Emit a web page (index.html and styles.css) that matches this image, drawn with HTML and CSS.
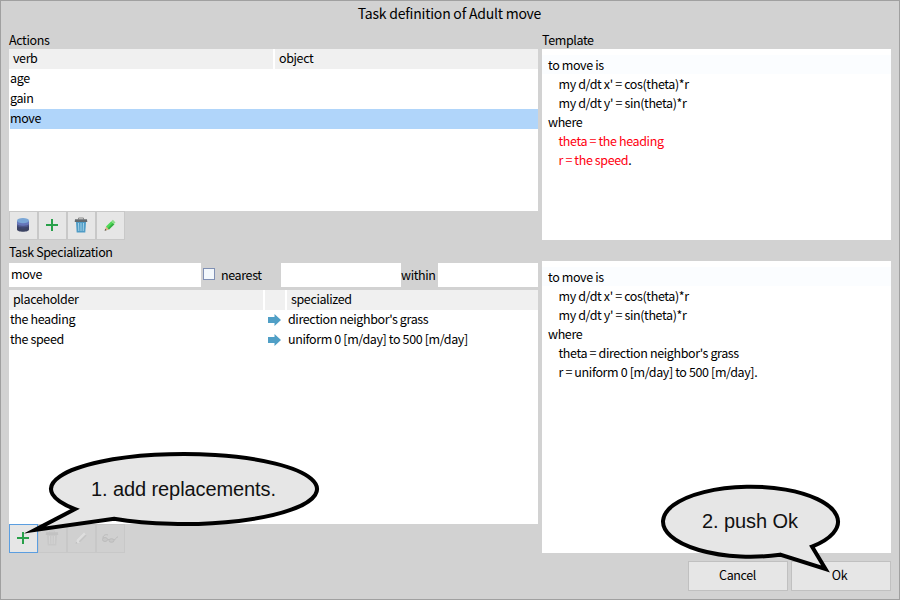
FILE: index.html
```html
<!DOCTYPE html>
<html lang="en">
<head>
<meta charset="utf-8">
<title>Task definition of Adult move</title>
<link rel="stylesheet" href="styles.css">
</head>
<body>
<div class="window">
  <div class="title"><span>Task definition of Adult move</span></div>
  <div class="columns">
    <div class="left">
      <div class="label actions-label">Actions</div>
      <div class="table actions">
        <div class="head"><span>verb</span><span>object</span></div>
        <div class="row">age</div>
        <div class="row">gain</div>
        <div class="row selected">move</div>
      </div>
      <div class="toolbar">
        <div class="tool"><svg width="16" height="16" viewBox="0 0 16 16"><path d="M2 4v8.5c0 3 12 3 12 0V4z" fill="#3d4464"/><path d="M2 4v5.5c0 2.6 12 2.6 12 0V4z" fill="#4d5688"/><path d="M2 4v2.8c0 2.6 12 2.6 12 0V4z" fill="#6676ba"/><ellipse cx="8" cy="3.7" rx="6" ry="2.6" fill="#7aa6d6"/><path d="M2 9.3c1 2.2 11 2.2 12 0" fill="none" stroke="#30385a" stroke-width=".7"/></svg></div>
        <div class="tool"><svg width="16" height="16" viewBox="0 0 16 16"><path d="M8 2v12M2 8h12" stroke="#28a04a" stroke-width="2"/></svg></div>
        <div class="tool"><svg width="16" height="16" viewBox="0 0 16 16"><path d="M5.5 2.5V1h5v1.5" fill="none" stroke="#8a8a8a"/><path d="M2 2.3h12l.3 2.7H1.7z" fill="#646a6e"/><path d="M3 5h10l-.7 10.5H3.7z" fill="#4f9cc6"/><path d="M5.5 6l.3 8M8 6v8M10.5 6l-.3 8" stroke="#a4d2e8"/></svg></div>
        <div class="tool"><svg width="16" height="16" viewBox="0 0 16 16"><path d="M3 13.5l1-4 3 3z" fill="#dfb083"/><path d="M2.6 13.8l.6-2 1.4 1.4z" fill="#554"/><path d="M4 9.5l5.3-5.2 3 3L7 12.5z" fill="#4fd956"/><path d="M5.8 11.3l5.2-5.2 1.3 1.2L7 12.5z" fill="#35ad43"/><path d="M9.3 4.3l1.6-1.5 2.6 2.6-1.6 1.5z" fill="#8bdc88"/></svg></div>
      </div>
      <div class="label spec-label">Task Specialization</div>
      <div class="form">
        <div class="field name">move</div>
        <div class="check"></div>
        <span class="nearest">nearest</span>
        <div class="field middle"></div>
        <span class="within">within</span>
        <div class="field last"></div>
      </div>
      <div class="table places">
        <div class="head"><span>placeholder</span><span></span><span>specialized</span></div>
        <div class="row"><span>the heading</span><svg width="13" height="12" viewBox="0 0 13 12"><path d="M0 3h6.5V0L13 6l-6.5 6V9H0z" fill="#509fc6"/></svg><span>direction neighbor's grass</span></div>
        <div class="row"><span>the speed</span><svg width="13" height="12" viewBox="0 0 13 12"><path d="M0 3h6.5V0L13 6l-6.5 6V9H0z" fill="#509fc6"/></svg><span>uniform 0 [m/day] to 500 [m/day]</span></div>
      </div>
      <div class="toolbar">
        <div class="tool focus"><svg width="16" height="16" viewBox="0 0 16 16"><path d="M8 2v12M2 8h12" stroke="#28a04a" stroke-width="2"/></svg></div>
        <div class="tool off"><svg width="16" height="16" viewBox="0 0 16 16"><path d="M5.5 2.5V1h5v1.5" fill="none" stroke="#c8c8c8"/><path d="M2 2.3h12l.3 2.7H1.7z" fill="#c2c2c2"/><path d="M3 5h10l-.7 10.5H3.7z" fill="#c8c8c8"/><path d="M5.5 6l.3 8M8 6v8M10.5 6l-.3 8" stroke="#d4d4d4"/></svg></div>
        <div class="tool off"><svg width="16" height="16" viewBox="0 0 16 16"><path d="M3 13.5l1-4 7-7 3 3-7 7z" fill="#dedede"/><path d="M5.8 11.3l6.7-6.7 1.5 1L7 12.5z" fill="#c5c5c5"/><path d="M2.6 13.8l.6-2 1.4 1.4z" fill="#bbb"/></svg></div>
        <div class="tool off"><svg width="18" height="16" viewBox="0 0 18 16"><g fill="#c8c8c8" stroke="#bcbcbc"><ellipse cx="4" cy="9.5" rx="2.5" ry="2"/><ellipse cx="10.5" cy="10.5" rx="2.5" ry="1.8"/><path d="M2 8c0-3 3-4 5-3M6.500 9.500h1.500M13 10c2-1 3-3 4-3.500" fill="none"/></g></svg></div>
      </div>
    </div>
    <div class="right">
      <div class="label template-label">Template</div>
      <div class="code source">
        <div class="line current">to move is</div>
        <div class="line in">my d/dt x' = cos(theta)*r</div>
        <div class="line in">my d/dt y' = sin(theta)*r</div>
        <div class="line">where</div>
        <div class="line in red">theta = the heading</div>
        <div class="line in"><span class="red">r = the speed</span>.</div>
      </div>
      <div class="code result">
        <div class="line current">to move is</div>
        <div class="line in">my d/dt x' = cos(theta)*r</div>
        <div class="line in">my d/dt y' = sin(theta)*r</div>
        <div class="line">where</div>
        <div class="line in">theta = direction neighbor's grass</div>
        <div class="line in">r = uniform 0 [m/day] to 500 [m/day].</div>
      </div>
      <div class="buttons"><div class="button">Cancel</div><div class="button ok">Ok</div></div>
    </div>
  </div>
  <svg class="callouts" width="900" height="600" viewBox="0 0 900 600">
    <g fill="#e6e6e6" stroke="#000" stroke-width="4" stroke-miterlimit="10">
      <path d="M75 509.05A133 35 0 1 1 114 518.76L35 530z"/>
      <path d="M780 554.65A87.5 35 0 1 1 812 546.6L825.5 569z"/>
    </g>
    <g class="callout-text">
      <text x="91" y="495.5" textLength="185">1. add replacements.</text>
      <text x="702" y="528" textLength="96">2. push Ok</text>
    </g>
  </svg>
</div>
</body>
</html>
```
FILE: styles.css
```css
* { box-sizing: border-box; }
body { margin: 0; }
.window {
  position: relative;
  width: 900px;
  height: 600px;
  background: #d2d2d2;
  border: 1px solid #a0a0a0;
  font: 12.5px/20px "Noto Sans CJK JP", sans-serif;
  letter-spacing: -0.38px;
  color: #000;
  white-space: nowrap;
  overflow: hidden;
}
.title { height: 32px; line-height: 24px; text-align: center; font-size: 14px; letter-spacing: -0.22px; padding-right: 1px; }
.columns { display: flex; gap: 4px; padding: 0 8px; }
.left { width: 529px; }
.right { width: 349px; }
.label { height: 16px; line-height: 13px; }
.spec-label { height: 23px; line-height: 24px; }
.table { background: #fff; }
.actions { height: 162px; }
.places { height: 234px; }
.head { display: grid; gap: 2px; height: 20px; }
.actions .head { grid-template-columns: 264px 1fr; }
.places .head { grid-template-columns: 254px 20px 1fr; }
.head span { background: #f0f0f0; padding-left: 4px; line-height: 17px; }
.row { height: 20px; margin-left: 1px; line-height: 17px; }
.selected { background: #b0d5fa; }
.places .row { display: grid; grid-template-columns: 258px 20px 1fr; }
.row svg { margin-top: 4px; }
.toolbar { display: flex; height: 29px; }
.tool {
  display: flex;
  align-items: center;
  justify-content: center;
  width: 29px;
  height: 29px;
  padding: 0 1px 1px 0;
  background: #e6e6e6;
  border: 1px solid #c8c8c8;
}
.tool.off { background: #d0d0d0; }
.tool.focus { border-color: #5b9ee0; }
.form { display: flex; height: 27px; line-height: 21px; }
.field { height: 24px; background: #fff; }
.name { width: 192px; padding-left: 2px; }
.middle { width: 120px; }
.last { width: 100px; }
.check {
  width: 12px;
  height: 12px;
  margin: 5px 6px 0 2px;
  background: #f3f8fc;
  border: 1px solid #8090b4;
}
.nearest { width: 60px; line-height: 24px; }
.within { width: 37px; line-height: 24px; }
.code { background: #fff; padding-top: 6px; }
.source { height: 191px; margin-bottom: 21px; }
.result { height: 292px; }
.line { height: 19px; line-height: 20px; padding-left: 6px; }
.line.in { padding-left: 16.5px; }
.current { background: #fbfdff; }
.red { color: #ff0010; }
.buttons { display: flex; justify-content: flex-end; gap: 3px; margin-top: 8px; }
.button {
  width: 100px;
  height: 30px;
  padding-right: 1px;
  border: 1px solid #c0c0c0;
  background: #e6e6e6;
  text-align: center;
  line-height: 26px;
}
.ok { padding-right: 3px; }
.callouts { position: absolute; left: -1px; top: -1px; letter-spacing: 0; }
.callout-text { font: 20px "Liberation Sans", sans-serif; fill: #111; }
```
